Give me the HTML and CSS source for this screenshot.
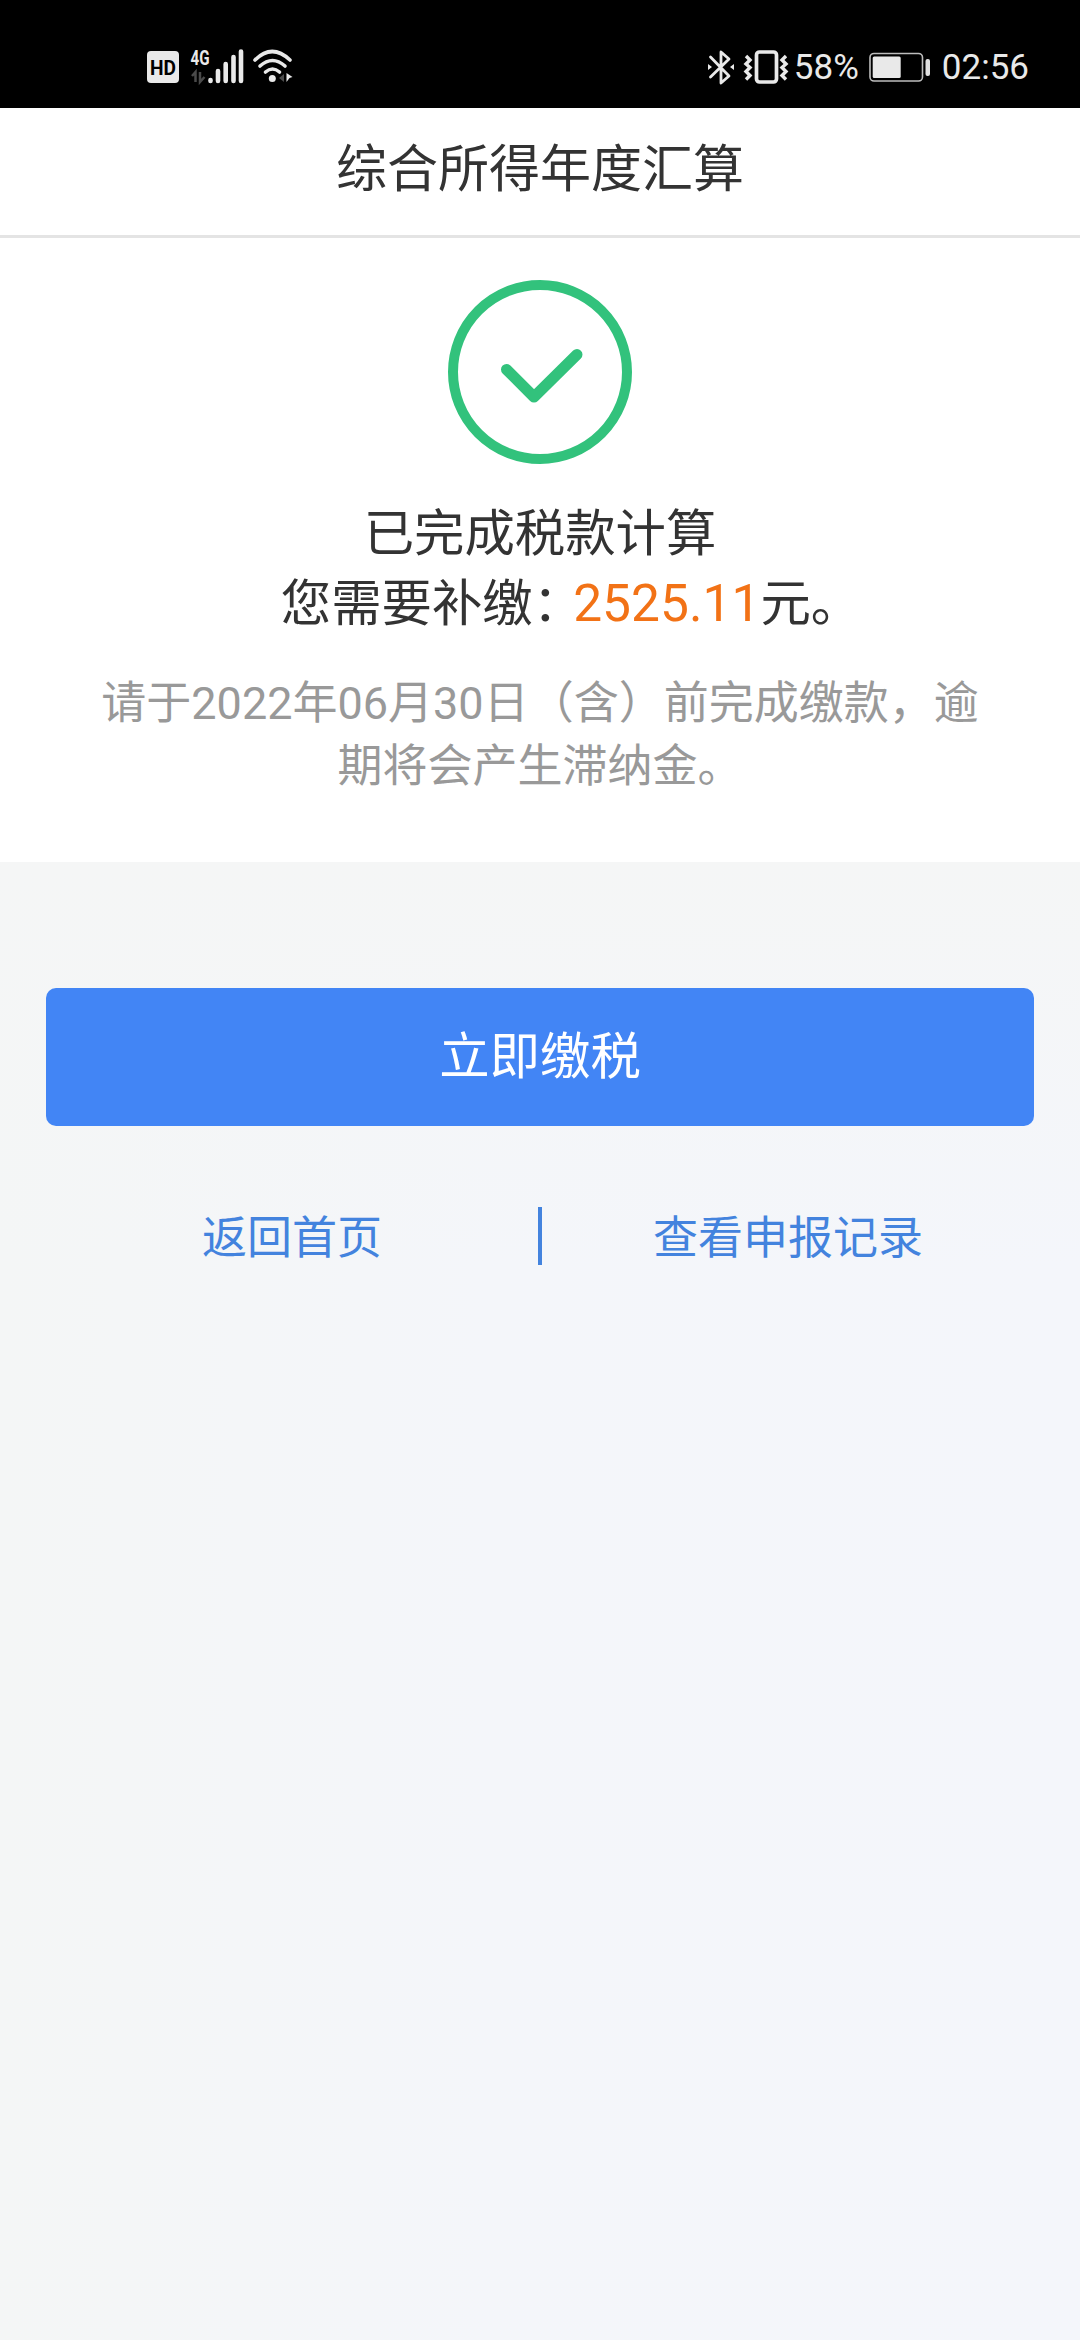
FILE: index.html
```
<!DOCTYPE html>
<html lang="zh-CN">
<head>
  <meta charset="UTF-8" />
  <meta name="viewport" content="width=device-width, initial-scale=1.0" />
  <title>综合所得年度汇算</title>
  <link rel="stylesheet" href="styles.css">
</head>
<body>
  <div class="status-bar">
    <div class="status-left">
      <!-- HD -->
      <svg width="32" height="36" viewBox="0 0 32 36">
        <rect x="0" y="2" width="32" height="32" rx="4" fill="#e9e9e9"/>
        <text class="hd-text" x="3" y="25.500" textLength="26" lengthAdjust="spacingAndGlyphs">HD</text>
      </svg>
      <!-- signal -->
      <svg class="signal" width="54" height="36" viewBox="0 0 54 36">
        <text class="net-text" x="0.5" y="15.500" textLength="19" lengthAdjust="spacingAndGlyphs">4G</text>
        <path d="M5.500 33V23L2 27M10 23v10l4.500-5" fill="none" stroke="#4a4a4a" stroke-width="2.500"/>
        <path d="M20.500 31v1M28 22v10M35.700 15v17M43.500 8v24M51 2.500v29.500" fill="none" stroke="#e9e9e9" stroke-width="4.600" stroke-linecap="round"/>
      </svg>
      <!-- wifi -->
      <svg class="wifi" width="40" height="36" viewBox="0 0 40 36">
        <g fill="none" stroke="#e9e9e9" stroke-width="3.600" stroke-linecap="round">
          <path d="M2 11Q19 -6 37 11"/>
          <path d="M7 17Q19.500 6 32 17"/>
          <path d="M12.500 23Q19.500 17 26.500 23"/>
        </g>
        <circle cx="19.300" cy="29.500" r="3.500" fill="#e9e9e9"/>
        <path d="M31 25v8l-5-4z" fill="#4a4a4a"/>
        <path d="M33.500 33v-9l6 4-3 1z" fill="#e9e9e9"/>
      </svg>
    </div>
    <div class="status-right">
      <!-- bluetooth -->
      <svg width="28" height="36" viewBox="0 0 28 36">
        <path d="M3.500 8L22 27L14 34V3L22 10L3.500 28" fill="none" stroke="#e9e9e9" stroke-width="2.800" stroke-linecap="round" stroke-linejoin="round"/>
        <path d="M1 15l4 3-4 3zM27 15l-4 3 4 3z" fill="#e9e9e9"/>
      </svg>
      <!-- vibrate -->
      <svg class="vibrate" width="44" height="36" viewBox="0 0 44 36">
        <rect x="12.500" y="3" width="20" height="30" rx="3" fill="none" stroke="#e9e9e9" stroke-width="3.700"/>
        <path d="M2 7l4 4-4 4 4 3.500-4 4 4 4-4 4M42 7l-4 4 4 4-4 3.500 4 4-4 4 4 4" fill="none" stroke="#e9e9e9" stroke-width="3.400"/>
      </svg>
      <span class="percent">58%</span>
      <!-- battery -->
      <svg class="battery" width="62" height="36" viewBox="0 0 62 36">
        <rect x="1" y="4.500" width="52.500" height="27.500" rx="4" fill="none" stroke="#bdbdbd" stroke-width="1.600"/>
        <rect x="3.700" y="7.500" width="28" height="21.500" rx="1.500" fill="#e9e9e9"/>
        <rect x="56.500" y="10" width="4.500" height="17" rx="2" fill="#e0e0e0"/>
      </svg>
      <span class="clock">02:56</span>
    </div>
  </div>

  <div class="app-header">综合所得年度汇算</div>

  <div class="result">
    <svg class="result-icon" width="184" height="184" viewBox="0 0 184 184">
      <circle cx="92" cy="92" r="87" fill="none" stroke="#32c27c" stroke-width="10"/>
      <path d="M58.500 89.500L86 117L129 74.500" fill="none" stroke="#32c27c" stroke-width="11" stroke-linecap="round" stroke-linejoin="round"/>
    </svg>
    <div class="result-title">已完成税款计算</div>
    <div class="result-title result-money">您需要补缴：<span class="amount">2525.11</span>元。</div>
    <p class="result-tip">请于2022年06月30日（含）前完成缴款，逾期将会产生滞纳金。</p>
  </div>

  <div class="actions">
    <button class="pay-btn">立即缴税</button>
    <div class="links">
      <a class="link">返回首页</a>
      <span class="divider"></span>
      <a class="link">查看申报记录</a>
    </div>
  </div>
</body>
</html>
```
FILE: styles.css
```
* {
  margin: 0;
  padding: 0;
  box-sizing: border-box;
}

body {
  min-height: 2340px;
  font-family: Roboto, "Noto Sans CJK SC", sans-serif;
  background: linear-gradient(to right, #f4f6f6, #f4f6fa 45%, #f4f6fb);
  color: #333;
}

.status-bar {
  display: flex;
  justify-content: space-between;
  height: 108px;
  padding: 48px 51px 0 147px;
  background: #000;
  color: #e9e9e9;
  font-size: 35px;
  line-height: 40px;
}

.status-left,
.status-right {
  display: flex;
  align-items: flex-start;
}

.status-bar svg {
  display: block;
  margin-top: 1px;
  overflow: visible;
}

.hd-text {
  font-size: 21px;
  line-height: 24px;
  font-weight: bold;
}

.net-text {
  font-size: 20px;
  line-height: 22px;
  font-weight: bold;
  fill: #e9e9e9;
}

.status-bar .signal {
  margin-left: 11px;
}

.status-bar .wifi {
  margin-left: 9px;
}

.status-bar .vibrate {
  margin-left: 9px;
}

.percent {
  margin-left: 6px;
}

.status-bar .battery {
  margin-left: 10px;
}

.clock {
  margin-left: 11px;
}

.app-header {
  height: 130px;
  border-bottom: 3px solid #e4e4e4;
  background: #fff;
  font-size: 51px;
  line-height: 124px;
  text-align: center;
}

.result {
  height: 624px;
  padding: 42px 100px 0;
  background: #fff;
  text-align: center;
}

.result-icon {
  display: block;
  margin: 0 auto 35px;
}

.result-title {
  font-size: 50.4px;
  line-height: 70px;
}

.result-money {
  padding-left: 62px;
}

.amount {
  margin-left: -10px;
  color: #f27216;
  font-size: 51.5px;
}

.result-tip {
  margin-top: 33px;
  font-size: 45px;
  line-height: 63px;
  color: #999;
}

.actions {
  padding: 126px 46px 0;
  background: linear-gradient(to bottom, #f5f6f6, rgba(245, 246, 246, 0));
}

.pay-btn {
  display: block;
  width: 100%;
  height: 138px;
  padding-bottom: 9px;
  border: none;
  border-radius: 10px;
  background: #4285f5;
  color: #fff;
  font-family: inherit;
  font-size: 50.4px;
}

.links {
  display: flex;
  align-items: center;
  margin-top: 81px;
}

.link {
  flex: 1;
  padding-top: 6px;
  color: #4383de;
  font-size: 45px;
  line-height: 52px;
  text-align: center;
}

.divider {
  width: 4px;
  height: 58px;
  background: #4383de;
}
```
